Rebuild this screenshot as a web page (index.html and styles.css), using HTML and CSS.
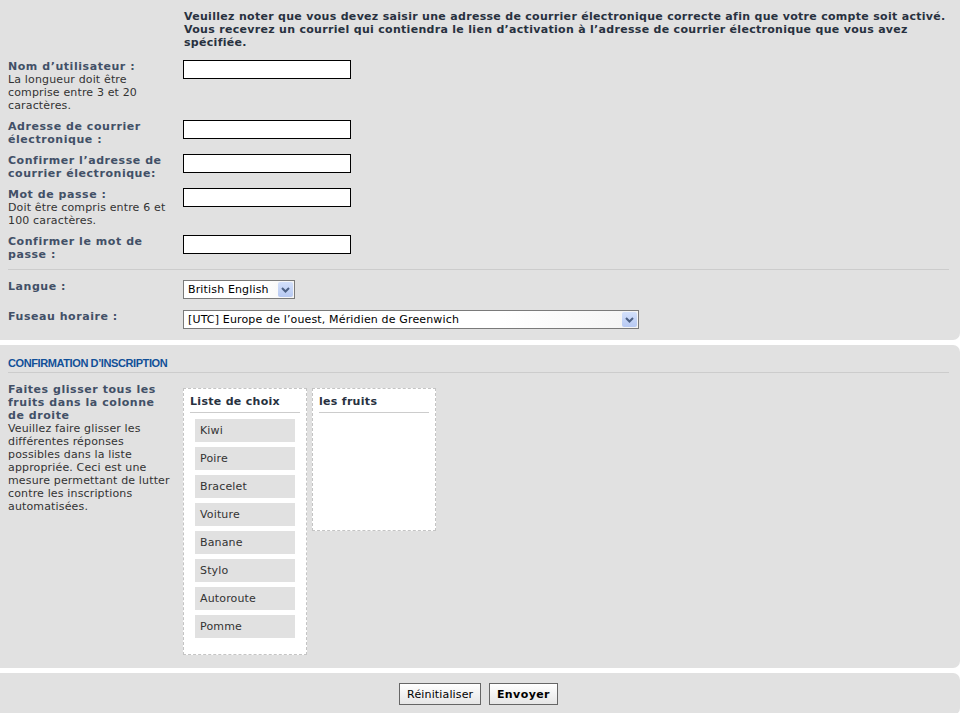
FILE: index.html
```html
<!DOCTYPE html>
<html lang="fr">
<head>
    <meta charset="UTF-8">
    <title>Inscription</title>
    <link rel="stylesheet" href="styles.css">
</head>
<body>
    <form id="register">
        <div class="panel panel-first">
            <p class="notice">Veuillez noter que vous devez saisir une adresse de courrier électronique correcte afin que votre compte soit activé. Vous recevrez un courriel qui contiendra le lien d’activation à l’adresse de courrier électronique que vous avez spécifiée.</p>

            <dl class="row">
                <dt><label for="username">Nom d’utilisateur :</label><span class="explain">La longueur doit être comprise entre 3 et 20 caractères.</span></dt>
                <dd><input type="text" id="username" class="inputbox"></dd>
            </dl>
            <dl class="row">
                <dt><label for="email">Adresse de courrier électronique :</label></dt>
                <dd><input type="text" id="email" class="inputbox"></dd>
            </dl>
            <dl class="row">
                <dt><label for="email_confirm">Confirmer l’adresse de courrier électronique:</label></dt>
                <dd><input type="text" id="email_confirm" class="inputbox"></dd>
            </dl>
            <dl class="row">
                <dt><label for="new_password">Mot de passe :</label><span class="explain">Doit être compris entre 6 et 100 caractères.</span></dt>
                <dd><input type="password" id="new_password" class="inputbox"></dd>
            </dl>
            <dl class="row">
                <dt><label for="password_confirm">Confirmer le mot de passe :</label></dt>
                <dd><input type="password" id="password_confirm" class="inputbox"></dd>
            </dl>

            <hr>

            <dl class="row row-select">
                <dt><label for="lang">Langue :</label></dt>
                <dd>
                    <span class="select-wrap select-lang">
                        <select id="lang"><option>British English</option></select>
                        <svg class="select-arrow" width="15" height="15" viewBox="0 0 15 15"><path d="M4 6 L7.5 9.5 L11 6" fill="none" stroke="#4d6185" stroke-width="2"/></svg>
                    </span>
                </dd>
            </dl>
            <dl class="row row-select">
                <dt><label for="tz">Fuseau horaire :</label></dt>
                <dd>
                    <span class="select-wrap select-tz">
                        <select id="tz"><option>[UTC] Europe de l’ouest, Méridien de Greenwich</option></select>
                        <svg class="select-arrow" width="15" height="15" viewBox="0 0 15 15"><path d="M4 6 L7.5 9.5 L11 6" fill="none" stroke="#4d6185" stroke-width="2"/></svg>
                    </span>
                </dd>
            </dl>
        </div>

        <div class="panel">
            <h3>Confirmation d’inscription</h3>
            <dl class="row row-qa">
                <dt><label>Faites glisser tous les fruits dans la colonne de droite</label><span class="explain">Veuillez faire glisser les différentes réponses possibles dans la liste appropriée. Ceci est une mesure permettant de lutter contre les inscriptions automatisées.</span></dt>
                <dd class="sortables">
                    <div class="sort-box">
                        <h4>Liste de choix</h4>
                        <ul class="sort-list">
                            <li>Kiwi</li>
                            <li>Poire</li>
                            <li>Bracelet</li>
                            <li>Voiture</li>
                            <li>Banane</li>
                            <li>Stylo</li>
                            <li>Autoroute</li>
                            <li>Pomme</li>
                        </ul>
                    </div>
                    <div class="sort-box">
                        <h4>les fruits</h4>
                        <ul class="sort-list sort-empty"></ul>
                    </div>
                </dd>
            </dl>
        </div>

        <div class="panel panel-buttons">
            <input type="reset" value="Réinitialiser" class="button">
            <input type="submit" value="Envoyer" class="button button-main">
        </div>
    </form>
</body>
</html>
```

FILE: styles.css
```css
body {
    margin: 0;
    background-color: #ffffff;
    color: #28313f;
    font-family: "DejaVu Sans", Verdana, sans-serif;
    font-size: 11px;
    line-height: 13px;
    letter-spacing: 0.15px;
}

.panel {
    background-color: #e1e1e1;
    border-radius: 0 7px 7px 0;
    margin: 0 2px 5px 0;
    padding: 10px 11px 13px 8px;
}
.panel-first { border-top-right-radius: 0; padding-bottom: 11px; }

.notice {
    margin: 0 0 11px 176px;
    font-weight: bold;
    letter-spacing: 0.3px;
}

/* form rows */
.row {
    display: flex;
    margin: 0 0 8px 0;
}
.row dt {
    width: 165px;
    margin-right: 10px;
    flex-shrink: 0;
}
.row dd { margin: 0; }
.row label {
    display: block;
    font-weight: bold;
    letter-spacing: 0.55px;
    color: #425067;
}
.explain {
    display: block;
    color: #333333;
}

.inputbox {
    box-sizing: border-box;
    width: 168px; height: 19px;
    margin: 0;
    border: 1px solid #000000;
    background-color: #ffffff;
    font-family: inherit; font-size: 11px;
}

hr {
    border: none;
    border-top: 1px solid #cccccc;
    margin: 0 0 10px 0;
    height: 0;
}

.row-select { margin-bottom: 11px; }
.row-select:last-child { margin-bottom: 0; }

.select-wrap {
    position: relative;
    display: inline-block;
}
.select-wrap select {
    -webkit-appearance: none;
    appearance: none;
    box-sizing: border-box;
    height: 19px;
    margin: 0;
    padding: 0 0 0 4px;
    border: 1px solid #7a7a7a;
    border-radius: 0;
    background: linear-gradient(to right, #ffffff 70%, #f4f4f4);
    color: #000000;
    font-family: inherit; font-size: 11px;
    letter-spacing: 0.15px;
}
.select-lang select { width: 112px; }
.select-tz select { width: 456px; }
.select-arrow {
    position: absolute;
    right: 2px; top: 2px;
    background: linear-gradient(#d3e0fb, #b7c9f2);
    border-radius: 2px;
}

/* confirmation panel */
h3 {
    margin: 0 0 10px 0;
    padding: 2px 0 2px 0;
    border-bottom: 1px solid #cccccc;
    font-family: "Liberation Sans Narrow", "Liberation Sans", Arial, sans-serif;
    font-size: 11px;
    letter-spacing: -0.4px;
    text-transform: uppercase;
    color: #115098;
}
.row-qa { margin-bottom: 0; }

.sortables {
    display: flex;
    align-items: flex-start;
    gap: 5px;
    padding-top: 5px;
}
.sort-box {
    box-sizing: border-box;
    width: 124px;
    background-color: #ffffff;
    border: 1px dashed #c4c4c4;
}
.sort-box h4 {
    margin: 0 6px;
    padding: 6px 0 4px 0;
    border-bottom: 1px solid #cccccc;
    font-size: 11px;
    letter-spacing: 0.3px;
    color: #28313f;
}
.sort-list {
    list-style: none;
    margin: 0;
    padding: 6px 11px 11px 11px;
}
.sort-list li {
    height: 23px;
    line-height: 23px;
    margin-bottom: 5px;
    padding-left: 5px;
    background-color: #e1e1e1;
    color: #333333;
}
.sort-empty { min-height: 100px; }

/* buttons */
.panel-buttons {
    text-align: center;
    margin-bottom: 0;
    padding-bottom: 10px;
}
.button {
    height: 22px;
    margin: 0 2px;
    padding: 0 7px;
    border: 1px solid #666666;
    border-radius: 0;
    background: linear-gradient(#ffffff, #e6e6e6);
    color: #000000;
    font-family: inherit; font-size: 11px;
    letter-spacing: 0.15px;
}
.button-main { font-weight: bold; padding: 0 7px; letter-spacing: 0.4px; }
```
